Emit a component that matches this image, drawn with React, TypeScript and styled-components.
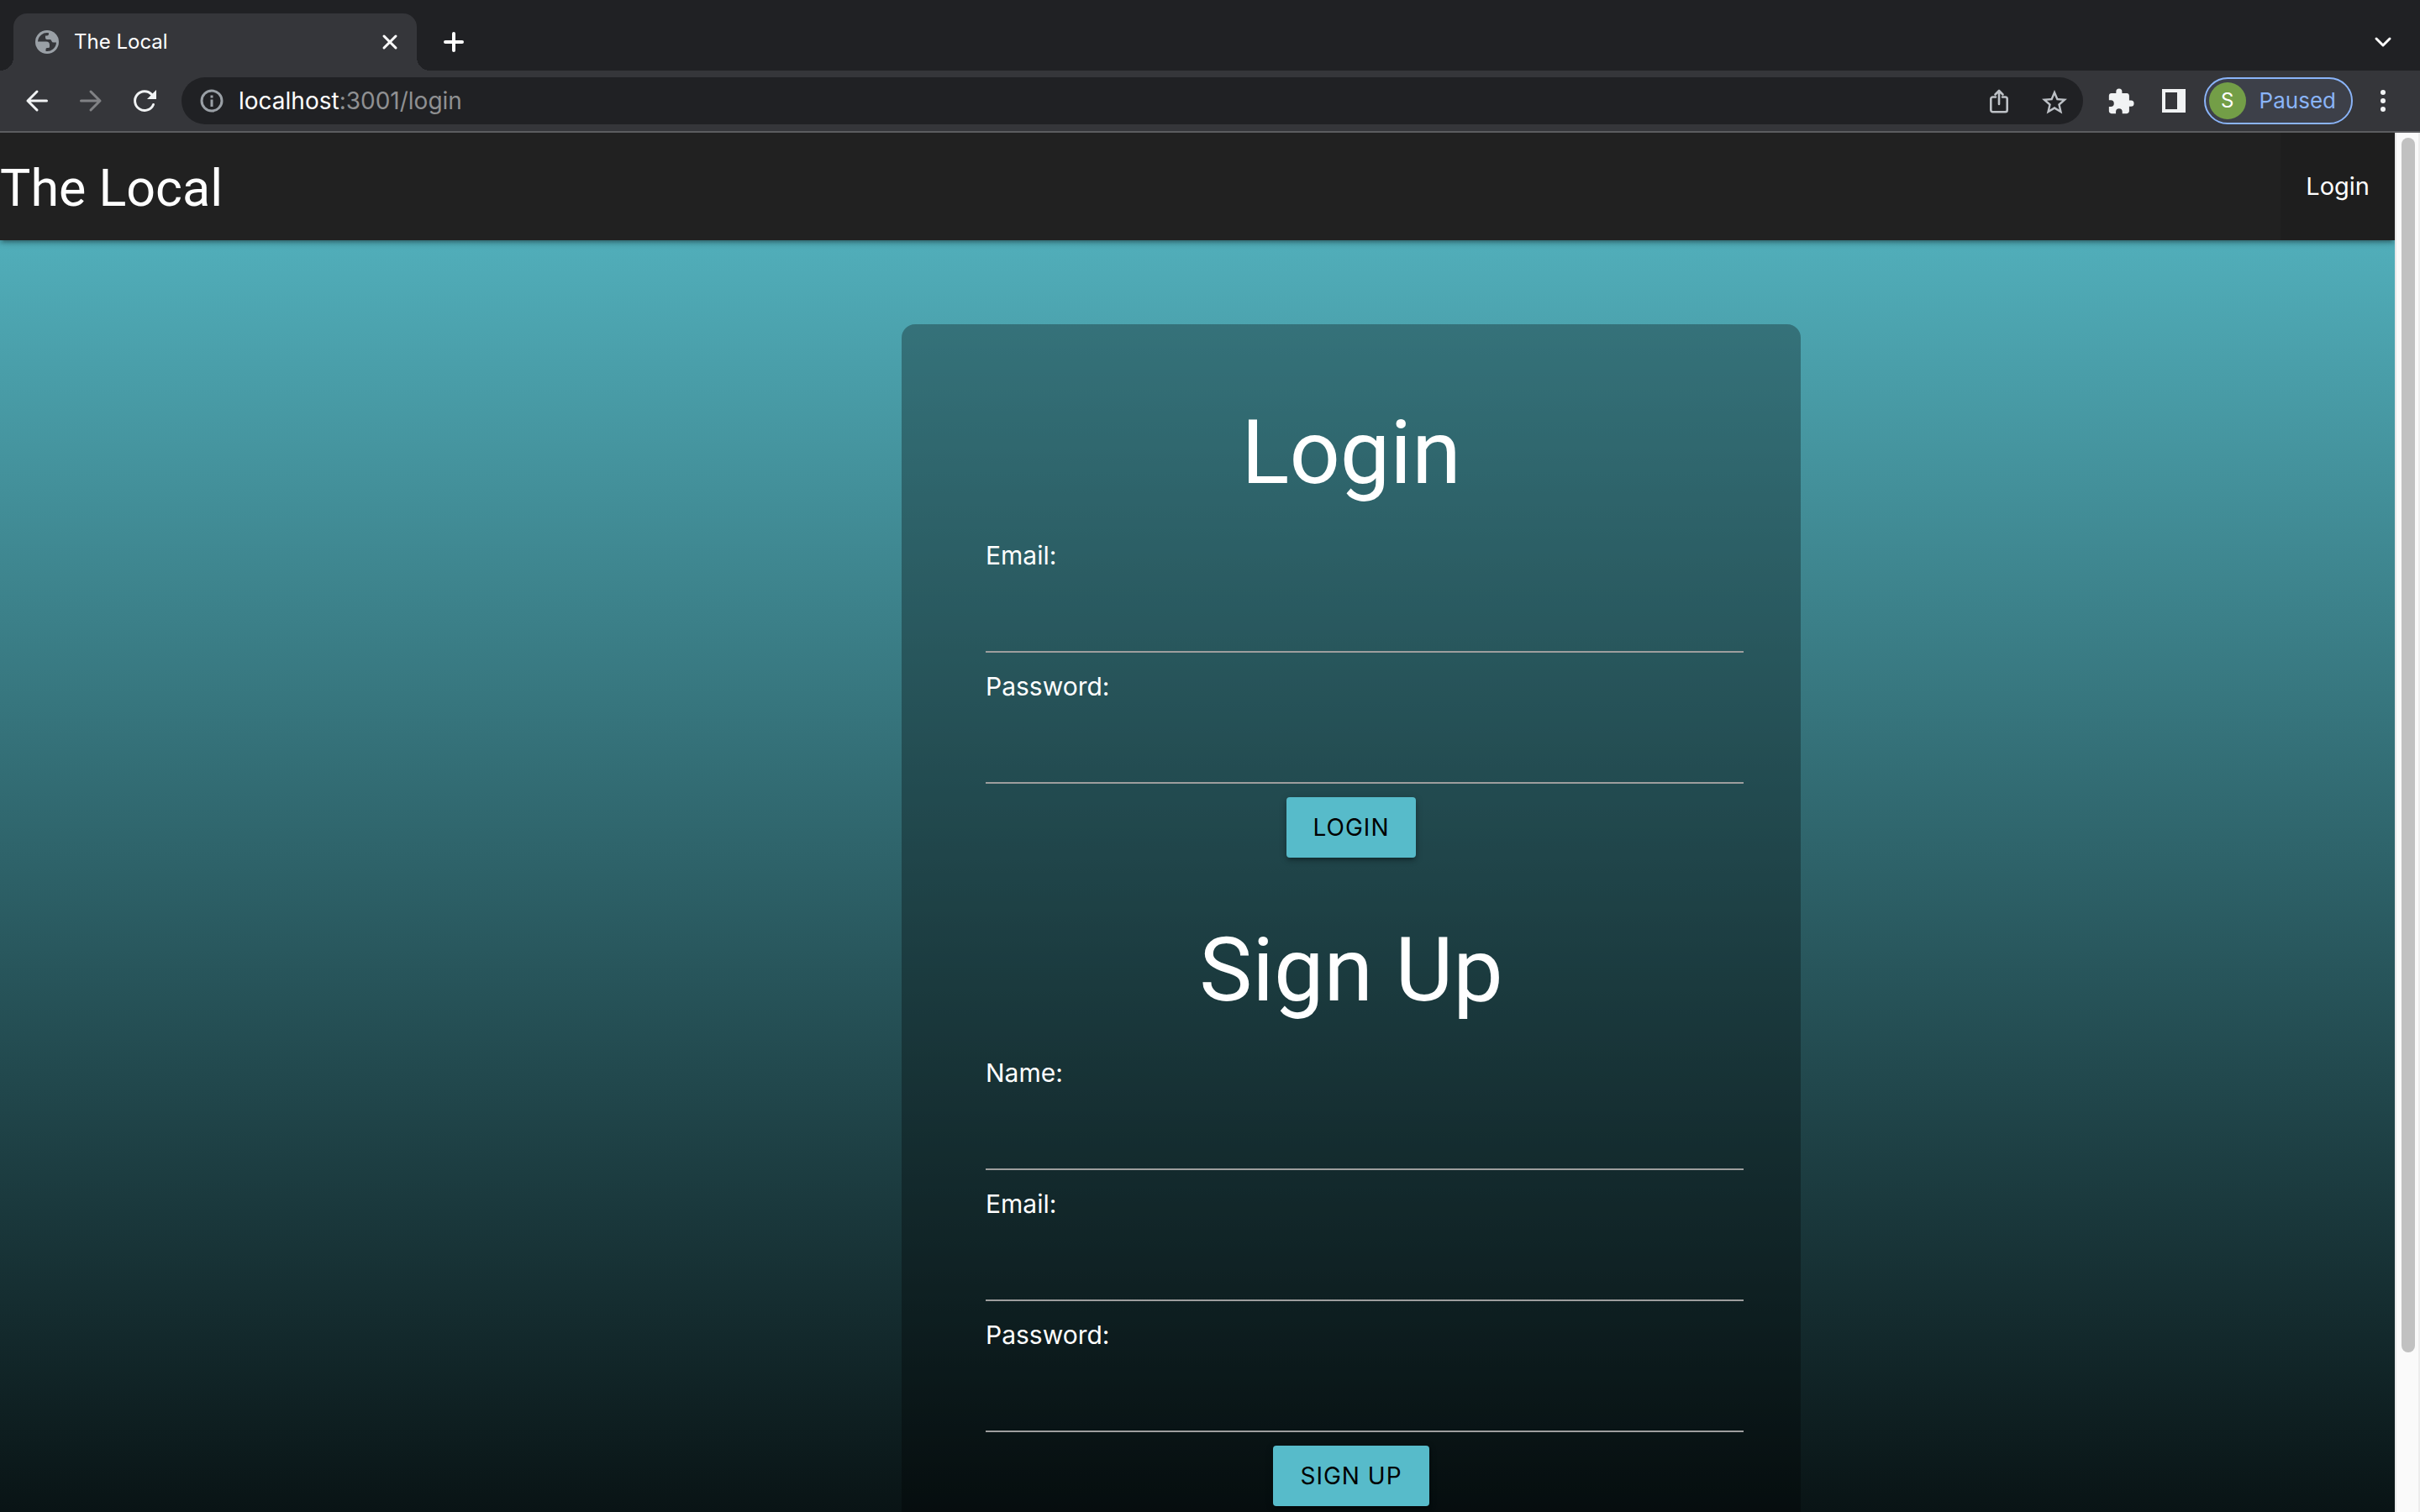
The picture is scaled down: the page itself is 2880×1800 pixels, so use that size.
import React, { useId } from 'react';
import styled, { createGlobalStyle } from 'styled-components';

const GlobalStyle = createGlobalStyle`
  *, *::before, *::after { box-sizing: border-box; }
  html, body { margin: 0; background: #000; }
  body { font-family: Inter, "Liberation Sans", sans-serif; overflow: hidden; }
  button { font: inherit; border: 0; padding: 0; background: none; color: inherit; cursor: pointer; }
`;

/* ---------- browser frame ---------- */

const Browser = styled.div`
  display: flex;
  flex-direction: column;
  height: 100vh;
  overflow: hidden;
`;

const TabStrip = styled.header`
  display: flex;
  align-items: flex-end;
  flex: none;
  height: 84px;
  padding: 0 32px 0 16px;
  background: #202124;
  color: #fff;
`;

const Tab = styled.div`
  position: relative;
  display: flex;
  align-items: center;
  width: 480px;
  height: 68px;
  padding: 0 20px 0 24px;
  gap: 16px;
  border-radius: 16px 16px 0 0;
  background: #35363a;
  font-size: 24px;
  line-height: 32px;

  &::before, &::after {
    content: "";
    position: absolute;
    bottom: 0;
    width: 16px;
    height: 16px;
  }
  &::before { right: 100%; background: radial-gradient(circle at 0 0, transparent 16px, #35363a 16px); }
  &::after { left: 100%; background: radial-gradient(circle at 100% 0, transparent 16px, #35363a 16px); }
`;

const TabTitle = styled.span`
  flex: 1;
`;

const StripButton = styled.button<{ $push?: boolean }>`
  display: grid;
  place-items: center;
  width: 24px;
  height: 68px;
  margin-left: ${p => (p.$push ? 'auto' : '0')};
`;

const NewTabButton = styled(StripButton)`
  margin-left: 32px;
`;

const Toolbar = styled.div`
  display: flex;
  align-items: center;
  flex: none;
  height: 74px;
  padding: 0 28px;
  background: #35363a;
  border-bottom: 2px solid #5c5d60;
  color: #f1f3f4;
`;

const NavButtons = styled.div`
  display: flex;
  gap: 32px;
  margin-right: 28px;
`;

const IconButton = styled.button<{ $dim?: boolean }>`
  display: grid;
  place-items: center;
  width: 32px;
  height: 32px;
  color: ${p => (p.$dim ? '#818285' : 'inherit')};
`;

const AddressBar = styled.div`
  display: flex;
  align-items: center;
  flex: 1;
  height: 56px;
  padding: 0 20px;
  border-radius: 28px;
  background: #202124;
  color: #bdc1c6;
`;

const Url = styled.span`
  flex: 1;
  margin-left: 16px;
  font-size: 28px;
  line-height: 36px;
  color: #8f9092;
`;

const Host = styled.span`
  color: #fff;
`;

const AddressActions = styled.div`
  display: flex;
  gap: 32px;
`;

const Extensions = styled.div`
  display: flex;
  gap: 32px;
  margin: 0 20px 0 28px;
`;

const ProfileButton = styled.button`
  display: flex;
  align-items: center;
  gap: 16px;
  height: 56px;
  padding: 0 18px 0 4px;
  border: 2px solid #8ab4f8;
  border-radius: 28px;
  background: #3d4049;
  color: #8ab4f8;
  font-size: 26px;
  line-height: 36px;
`;

const Avatar = styled.span`
  display: grid;
  place-items: center;
  width: 44px;
  height: 44px;
  border-radius: 50%;
  background: #739e47;
  color: #fff;
  font-size: 24px;
`;

const MenuButton = styled(IconButton)`
  margin-left: 20px;
`;

const Viewport = styled.div`
  display: flex;
  flex: 1;
  min-height: 0;
  align-items: stretch;
  overflow: hidden;
`;

const Scrolled = styled.div`
  flex: 1;
  overflow: hidden;
`;

const ScrollTrack = styled.div`
  display: grid;
  grid-template-rows: 1446fr 184fr;
  width: 30px;
  padding: 6px;
  background: #fafafa;
  border-left: 2px solid #e8e8e8;
  border-right: 2px solid #ededed;
`;

const ScrollThumb = styled.div`
  width: 16px;
  border-radius: 8px;
  background: #c1c1c1;
`;

/* ---------- page ---------- */

const Page = styled.div`
  background: linear-gradient(#57bbc8, #000);
  color: #fff;
`;

const NavBar = styled.nav`
  display: flex;
  justify-content: space-between;
  height: 128px;
  background: #212121;
  box-shadow: 0 4px 4px rgba(0, 0, 0, 0.14), 0 6px 2px -4px rgba(0, 0, 0, 0.12), 0 2px 10px rgba(0, 0, 0, 0.2);
  line-height: 128px;

  a { color: inherit; text-decoration: none; }
`;

const Brand = styled.a`
  font-family: Roboto, "Liberation Sans", sans-serif;
  font-size: 61px;
  line-height: 132px;
`;

const NavLink = styled.a`
  padding: 0 30px;
  background: #1e1e1e;
  font-size: 29px;
`;

const Main = styled.main`
  display: grid;
  grid-template-columns: 1073fr 1070fr 707fr;
  padding: 100px 0;
`;

const Card = styled.div`
  grid-column: 2;
  display: flex;
  flex-direction: column;
  gap: 75px;
  padding: 94px 100px 100px;
  border-radius: 16px;
  background: rgba(0, 0, 0, 0.3);
`;

const Form = styled.form`
  display: flex;
  flex-direction: column;
  align-items: center;
`;

const Title = styled.h2`
  margin: 0 0 39px;
  font-family: Roboto, "Liberation Sans", sans-serif;
  font-size: 106px;
  font-weight: 400;
  line-height: 118px;
`;

const FieldRow = styled.div`
  display: flex;
  flex-direction: column;
  align-self: stretch;
  margin: 0 -32px 16px 0;
  font-size: 30px;
  line-height: 48px;
`;

const TextInput = styled.input`
  width: 100%;
  height: 92px;
  padding: 0;
  border: 0;
  border-bottom: 2px solid #9e9e9e;
  outline: 0;
  background: transparent;
  color: inherit;
  font: inherit;
`;

const SubmitButton = styled.button`
  height: 72px;
  padding: 0 32px;
  border-radius: 4px;
  background: #57bbca;
  box-shadow: 0 4px 4px rgba(0, 0, 0, 0.14), 0 6px 2px -4px rgba(0, 0, 0, 0.12), 0 2px 10px rgba(0, 0, 0, 0.2);
  color: #000;
  font-size: 28px;
  letter-spacing: 1px;
  text-transform: uppercase;
`;

type FieldProps = { label: string; type: string };

function Field({ label, type }: FieldProps) {
  const id = useId();
  return (
    <FieldRow>
      <label htmlFor={id}>{label}:</label>
      <TextInput id={id} type={type} />
    </FieldRow>
  );
}

type EntryFormProps = { title: string; fields: FieldProps[] };

function EntryForm({ title, fields }: EntryFormProps) {
  return (
    <Form onSubmit={e => e.preventDefault()}>
      <Title>{title}</Title>
      {fields.map(f => <Field key={f.label} {...f} />)}
      <SubmitButton type="submit">{title}</SubmitButton>
    </Form>
  );
}

/* ---------- icons ---------- */

const line = { fill: 'none', stroke: 'currentColor', strokeLinecap: 'round', strokeLinejoin: 'round' } as const;

const Globe = () => (
  <svg width="32" height="32" viewBox="0 0 32 32" aria-hidden="true">
    <circle cx="16" cy="16" r="14" fill="#9aa0a6" />
    <path fill="#35363a" d="M5 15.500A11 11 0 0 1 18 5.200V6.500q0 2-2 2h-2v2.500q0 2 2 2h3.500q1.500 0 2 2 .5 1.500 2 1.500H27A11 11 0 0 1 14.500 27v-2.500q0-1.500 1.500-1.500h1.500q1.500 0 1.500-1.500v-2q0-4-4-4z" />
  </svg>
);
const Close = () => (
  <svg width="20" height="20" viewBox="0 0 20 20" {...line} strokeWidth="3" aria-hidden="true"><path d="M3 3l14 14M17 3L3 17" /></svg>
);
const Plus = () => (
  <svg width="24" height="24" viewBox="0 0 24 24" {...line} strokeWidth="4" aria-hidden="true"><path d="M12 2v20M2 12h20" /></svg>
);
const Chevron = () => (
  <svg width="24" height="24" viewBox="0 0 24 24" {...line} strokeWidth="3" aria-hidden="true"><path d="M4 8l8 8 8-8" /></svg>
);
const Back = () => (
  <svg width="32" height="32" viewBox="0 0 32 32" {...line} strokeWidth="3" aria-hidden="true"><path d="M27.500 16H5M16 5L5 16l11 11" /></svg>
);
const Forward = () => (
  <svg width="32" height="32" viewBox="0 0 32 32" {...line} strokeWidth="3" aria-hidden="true"><path d="M4.500 16H27M16 5l11 11-11 11" /></svg>
);
const Reload = () => (
  <svg width="32" height="32" viewBox="0 0 32 32" aria-hidden="true">
    <path {...line} strokeWidth="3" d="M26.5 20.5A11.4 11.4 0 1 1 24.6 8.6" />
    <path fill="currentColor" d="M30 3v11H19z" />
  </svg>
);
const Info = () => (
  <svg width="32" height="32" viewBox="0 0 32 32" aria-hidden="true">
    <circle cx="16" cy="16" r="12" fill="none" stroke="#9aa0a6" strokeWidth="3" />
    <path fill="#9aa0a6" d="M14.5 9.5h3v3h-3zM14.5 14.5h3v8.500h-3z" />
  </svg>
);
const Share = () => (
  <svg width="32" height="32" viewBox="0 0 32 32" {...line} strokeWidth="2.600" aria-hidden="true">
    <path d="M12 11.500H8.500a2.200 2.200 0 0 0-2.200 2.200V27a2.200 2.200 0 0 0 2.200 2.200h15A2.200 2.200 0 0 0 25.700 27V13.700a2.200 2.200 0 0 0-2.200-2.200H20M16 20V4.500M11.500 8.500L16 4l4.500 4.500" />
  </svg>
);
const Star = () => (
  <svg width="36" height="36" viewBox="0 0 24 24" fill="currentColor" aria-hidden="true">
    <path d="M22 9.240l-7.190-.62L12 2 9.190 8.630 2 9.240l5.460 4.730L5.820 21 12 17.270 18.180 21l-1.630-7.030L22 9.240zM12 15.400l-3.760 2.270 1-4.280-3.320-2.880 4.380-.38L12 6.100l1.710 4.040 4.380.38-3.320 2.880 1 4.280L12 15.400z" />
  </svg>
);
const Puzzle = () => (
  <svg width="34" height="34" viewBox="0 0 24 24" fill="currentColor" aria-hidden="true">
    <path d="M20.500 11H19V7c0-1.100-.9-2-2-2h-4V3.500a2.500 2.500 0 0 0-5 0V5H4c-1.100 0-2 .9-2 2v3.800h1.500a2.700 2.700 0 0 1 0 5.400H2V20c0 1.100.9 2 2 2h3.800v-1.500a2.700 2.700 0 0 1 5.400 0V22H17c1.100 0 2-.9 2-2v-4h1.500a2.500 2.500 0 0 0 0-5z" />
  </svg>
);
const SidePanel = () => (
  <svg width="32" height="32" viewBox="0 0 32 32" fill="currentColor" aria-hidden="true">
    <path fillRule="evenodd" d="M2 2h28v28H2zM6 6v20h14V6z" />
  </svg>
);
const Kebab = () => (
  <svg width="32" height="32" viewBox="0 0 32 32" fill="currentColor" aria-hidden="true">
    <circle cx="16" cy="6" r="3" /><circle cx="16" cy="16" r="3" /><circle cx="16" cy="26" r="3" />
  </svg>
);

export default function App() {
  return (
    <Browser>
      <GlobalStyle />
      <TabStrip>
        <Tab>
          <Globe />
          <TabTitle>The Local</TabTitle>
          <StripButton aria-label="Close tab"><Close /></StripButton>
        </Tab>
        <NewTabButton aria-label="New tab"><Plus /></NewTabButton>
        <StripButton $push aria-label="Search tabs"><Chevron /></StripButton>
      </TabStrip>
      <Toolbar>
        <NavButtons>
          <IconButton aria-label="Back"><Back /></IconButton>
          <IconButton $dim aria-label="Forward"><Forward /></IconButton>
          <IconButton aria-label="Reload"><Reload /></IconButton>
        </NavButtons>
        <AddressBar>
          <Info />
          <Url><Host>localhost</Host>:3001/login</Url>
          <AddressActions>
            <IconButton aria-label="Share"><Share /></IconButton>
            <IconButton aria-label="Bookmark"><Star /></IconButton>
          </AddressActions>
        </AddressBar>
        <Extensions>
          <IconButton aria-label="Extensions"><Puzzle /></IconButton>
          <IconButton aria-label="Side panel"><SidePanel /></IconButton>
        </Extensions>
        <ProfileButton><Avatar>S</Avatar>Paused</ProfileButton>
        <MenuButton aria-label="Menu"><Kebab /></MenuButton>
      </Toolbar>
      <Viewport>
        <Scrolled>
          <Page>
            <NavBar>
              <Brand href="#">The Local</Brand>
              <NavLink href="#">Login</NavLink>
            </NavBar>
            <Main>
              <Card>
                <EntryForm
                  title="Login"
                  fields={[{ label: 'Email', type: 'email' }, { label: 'Password', type: 'password' }]}
                />
                <EntryForm
                  title="Sign Up"
                  fields={[
                    { label: 'Name', type: 'text' },
                    { label: 'Email', type: 'email' },
                    { label: 'Password', type: 'password' },
                  ]}
                />
              </Card>
            </Main>
          </Page>
        </Scrolled>
        <ScrollTrack><ScrollThumb /></ScrollTrack>
      </Viewport>
    </Browser>
  );
}
